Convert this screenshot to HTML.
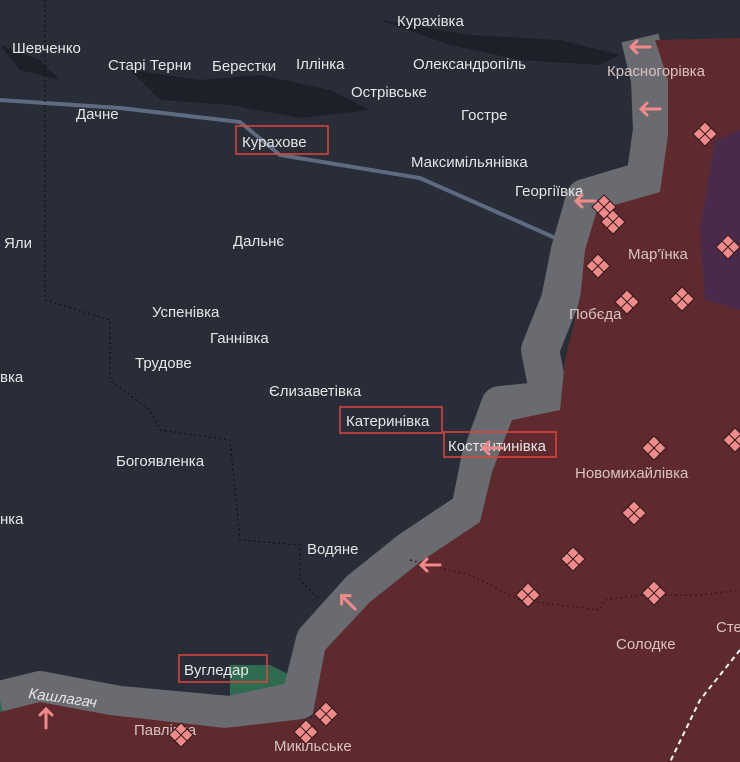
<!DOCTYPE html>
<html><head><meta charset="utf-8"><style>
html,body{margin:0;padding:0;width:740px;height:762px;overflow:hidden;background:#282d38}
svg{display:block}
text{font-family:"Liberation Sans","DejaVu Sans",sans-serif;font-size:15px;fill:#e6e6e6}
.r{fill:#d9c3c3}
</style></head><body>
<svg width="740" height="762" viewBox="0 0 740 762">
<defs>
<g id="d"><g transform="rotate(45)"><rect x="-9" y="-9" width="18" height="18" fill="#2b1a1c"/><rect x="-8" y="-8" width="7.5" height="7.5" fill="#f28a8a"/><rect x="0.5" y="-8" width="7.5" height="7.5" fill="#f28a8a"/><rect x="-8" y="0.5" width="7.5" height="7.5" fill="#f28a8a"/><rect x="0.5" y="0.5" width="7.5" height="7.5" fill="#f28a8a"/></g></g>
<g id="al"><path d="M10,0 H-9 M-3,-6 L-9,0 L-3,6" stroke="#f28a8a" stroke-width="3" fill="none" stroke-linecap="round"/></g>
</defs>
<rect width="740" height="762" fill="#282d38"/>
<path d="M130,70 L200,80 L260,75 L330,90 L370,110 L300,118 L230,105 L160,100 Z" fill="#1c2029"/>
<path d="M380,20 L470,35 L560,40 L620,55 L600,65 L520,60 L450,45 Z" fill="#1c2029"/>
<path d="M0,45 L20,70 L60,80 L40,60 Z" fill="#1c2029"/>
<polyline points="0,100 120,108 240,122 280,155 420,178 560,240 740,310" fill="none" stroke="#5d6a80" stroke-width="4"/>
<path d="M230,665 L270,665 L300,680 L310,705 L230,712 Z" fill="#2e6b50"/>
<path d="M0,690 L25,685 L10,720 L0,722 Z" fill="#2e6b50"/>
<polyline points="640,38 650,80 652,130 645,180 585,198 570,250 560,300 540,350 550,400 500,405 480,460 470,510 410,550 360,590 315,640 300,700 230,715 120,705 40,690 0,700" fill="none" stroke="#6a6b70" stroke-width="38" stroke-linejoin="round"/>
<path d="M655,40 L740,38 L740,762 L0,762 L0,712 L40,702 L110,715 L225,728 L312,718 L325,650 L370,602 L420,562 L480,522 L492,472 L512,420 L560,410 L565,360 L580,300 L585,250 L597,210 L660,192 L668,135 L668,80 Z" fill="#5e2a2e"/>
<path d="M715,140 L740,130 L740,310 L705,300 L700,230 Z" fill="#4a2a4a"/>
<polyline points="410,560 470,575 520,600 600,610 605,600 640,595 700,595 740,590" fill="none" stroke="#3a1a1d" stroke-width="1.5" stroke-dasharray="2 3"/>
<polyline points="45,0 45,300 110,320 110,380 150,410 160,430 230,440 240,540 300,545 300,580 320,600" fill="none" stroke="#111" stroke-width="1.2" stroke-dasharray="2 3"/>
<polyline points="740,650 700,700 670,762" fill="none" stroke="#fff" stroke-width="2" stroke-dasharray="5 4"/>
<text x="397" y="26" font-size="17">Курахівка</text>
<text x="12" y="53">Шевченко</text>
<text x="108" y="70">Старі Терни</text>
<text x="212" y="71">Берестки</text>
<text x="296" y="69">Іллінка</text>
<text x="413" y="69">Олександропіль</text>
<text x="351" y="97">Острівське</text>
<text x="461" y="120" font-size="17">Гостре</text>
<text x="76" y="119">Дачне</text>
<rect x="236" y="126" width="92" height="28" fill="none" stroke="#e0453a" stroke-width="1.5"/>
<text x="242" y="147" font-size="17">Курахове</text>
<text x="411" y="167">Максимільянівка</text>
<text x="515" y="196">Георгіївка</text>
<text x="4" y="248">Яли</text>
<text x="233" y="246">Дальнє</text>
<text x="152" y="317">Успенівка</text>
<text x="210" y="343">Ганнівка</text>
<text x="0" y="382">вка</text>
<text x="135" y="368">Трудове</text>
<text x="269" y="396">Єлизаветівка</text>
<rect x="340" y="407" width="102" height="26" fill="none" stroke="#e0453a" stroke-width="1.5"/>
<text x="346" y="426">Катеринівка</text>
<rect x="444" y="432" width="112" height="25" fill="none" stroke="#e0453a" stroke-width="1.5"/>
<text x="448" y="451">Костянтинівка</text>
<text x="116" y="466">Богоявленка</text>
<text x="0" y="524">нка</text>
<text x="307" y="554">Водяне</text>
<rect x="179" y="655" width="88" height="27" fill="none" stroke="#e0453a" stroke-width="1.5"/>
<text x="184" y="675" font-size="17">Вугледар</text>
<text x="28" y="698" font-size="14" font-style="italic" fill="#aaa" transform="rotate(8 28 698)">Кашлагач</text>
<text x="607" y="76" font-size="17" class="r">Красногорівка</text>
<text x="628" y="259" font-size="17" class="r">Мар'їнка</text>
<text x="569" y="319" class="r">Побєда</text>
<text x="575" y="478" class="r">Новомихайлівка</text>
<text x="616" y="649" class="r">Солодке</text>
<text x="716" y="632" class="r">Сте</text>
<text x="134" y="735" class="r">Павлівка</text>
<text x="274" y="751" class="r">Микільське</text>
<use href="#d" x="705" y="134"/><use href="#d" x="604" y="207"/><use href="#d" x="613" y="222"/>
<use href="#d" x="728" y="247"/><use href="#d" x="598" y="266"/><use href="#d" x="627" y="302"/>
<use href="#d" x="682" y="299"/><use href="#d" x="654" y="448"/><use href="#d" x="634" y="513"/>
<use href="#d" x="573" y="559"/><use href="#d" x="528" y="595"/><use href="#d" x="654" y="593"/>
<use href="#d" x="735" y="440"/><use href="#d" x="181" y="735"/><use href="#d" x="306" y="732"/><use href="#d" x="326" y="714"/>
<use href="#al" x="640" y="47"/><use href="#al" x="650" y="109"/><use href="#al" x="585" y="201"/>
<use href="#al" x="492" y="448"/><use href="#al" x="430" y="565"/>
<g transform="translate(348,602) rotate(45)"><use href="#al"/></g>
<g transform="translate(46,718) rotate(90)"><use href="#al"/></g>
</svg>
</body></html>
